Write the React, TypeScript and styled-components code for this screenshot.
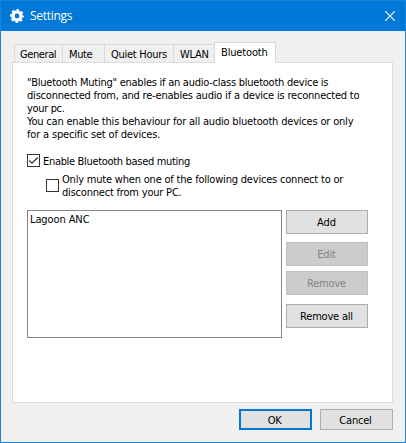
import React from 'react';
import styled, { createGlobalStyle } from 'styled-components';

const Global = createGlobalStyle`
  * { box-sizing: border-box; }
  body { margin: 0; overflow: hidden; }
`;

const Dialog = styled.div`
  width: 406px;
  height: 443px;
  display: flex;
  flex-direction: column;
  border: 1px solid #1883d7;
  background: #f0f0f0;
  color: #000;
  font: 11px/13px 'DejaVu Sans Condensed', 'DejaVu Sans', sans-serif;
  white-space: nowrap;
`;

const TitleBar = styled.header`
  height: 30px;
  flex: none;
  display: flex;
  align-items: center;
  padding: 0 10px 0 9px;
  background: #0078d7;
  color: #fff;
`;

const Title = styled.h1`
  flex: 1;
  margin: 0 0 0 6px;
  font: 400 12px/16px 'Open Sans', 'Noto Sans', sans-serif;
  letter-spacing: -0.3px;
`;

const Text = styled.span<{ $spacing?: number }>`
  display: block;
  letter-spacing: ${({ $spacing = -0.2 }) => $spacing}px;
`;

const Tabs = styled.nav`
  height: 21px;
  margin: 11px 0 -1px 13px;
  flex: none;
  display: flex;
  align-items: flex-end;
`;

const Tab = styled.div<{ $width: number; $active?: boolean; $indent?: number }>`
  width: ${({ $width }) => $width}px;
  height: ${({ $active }) => ($active ? 21 : 18)}px;
  margin-bottom: ${({ $active }) => ($active ? 0 : 1)}px;
  padding: 3px 0 0 ${({ $indent = 6 }) => $indent}px;
  border: 1px solid #d9d9d9;
  border-bottom: 0;
  border-right-width: ${({ $active }) => ($active ? 1 : 0)}px;
  background: ${({ $active }) => ($active ? '#fff' : '#f0f0f0')};
  z-index: ${({ $active }) => ($active ? 1 : 0)};
`;

const Panel = styled.main`
  width: 381px;
  height: 341px;
  margin-left: 11px;
  padding: 13px 0 0 14px;
  border: 1px solid #dcdcdc;
  background: #fff;
`;

const CheckRow = styled.label`
  height: 14px;
  display: flex;
  align-items: flex-start;
  gap: 3px;
  margin-top: 13px;
  > ${Text} { margin-top: 1px; }
`;

const SubCheckRow = styled.label`
  display: flex;
  align-items: flex-start;
  gap: 3px;
  margin: 5px 0 0 19px;
`;

const Box = styled.span<{ $drop?: number }>`
  width: 13px;
  height: 13px;
  flex: none;
  margin-top: ${({ $drop = 0 }) => $drop}px;
  display: grid;
  place-items: center;
  border: 1px solid #333;
`;

const Devices = styled.section`
  display: flex;
  gap: 4px;
  margin-top: 11px;
`;

const List = styled.div`
  width: 255px;
  height: 128px;
  padding: 2px;
  border: 1px solid #828790;
`;

const Actions = styled.div`
  display: flex;
  flex-direction: column;
`;

const Button = styled.button<{ $width?: number; $gap?: number; $primary?: boolean }>`
  width: ${({ $width = 82 }) => $width}px;
  height: ${({ $width }) => ($width ? 21 : 24)}px;
  margin: ${({ $gap = 0 }) => $gap}px 0 0;
  padding: ${({ $width }) => ($width ? '1px 2px 0 0' : '0 1px 0 0')};
  display: flex;
  align-items: center;
  justify-content: center;
  border: ${({ $primary }) => ($primary ? '2px solid #0078d7' : '1px solid #adadad')};
  background: #e1e1e1;
  color: #000;
  font: inherit;
  &:disabled { background: #ccc; border-color: #bfbfbf; color: #838383; }
`;

const Footer = styled.footer`
  display: flex;
  justify-content: flex-end;
  gap: 8px;
  margin: 6px 12px 0 0;
`;

const tabs = [
  { label: 'General', width: 48, spacing: -0.4, indent: 5 },
  { label: 'Mute', width: 42, spacing: -0.4 },
  { label: 'Quiet Hours', width: 69, spacing: -0.28 },
  { label: 'WLAN', width: 41, spacing: -0.3 },
  { label: 'Bluetooth', width: 62, spacing: -0.15, active: true },
];

const intro = [
  { text: '"Bluetooth Muting" enables if an audio-class bluetooth device is', spacing: -0.25 },
  { text: 'disconnected from, and re-enables audio if a device is reconnected to', spacing: -0.2 },
  { text: 'your pc.', spacing: -0.35 },
  { text: 'You can enable this behaviour for all audio bluetooth devices or only', spacing: -0.19 },
  { text: 'for a specific set of devices.', spacing: -0.17 },
];

const GearIcon = () => (
  <svg width="14" height="14" viewBox="0 0 14 14" fill="none" stroke="#fff">
    <circle cx="7" cy="7" r="4.1" strokeWidth="3.4" />
    <circle cx="7" cy="7" r="6.2" strokeWidth="1.6" strokeDasharray="2.6 2.27" strokeDashoffset="1.3" />
  </svg>
);

export default function App() {
  return (
    <Dialog>
      <Global />
      <TitleBar>
        <GearIcon />
        <Title>Settings</Title>
        <svg width="10" height="10" viewBox="0 0 10 10" stroke="#fff" strokeWidth="1.1">
          <path d="M0 0 10 10M10 0 0 10" />
        </svg>
      </TitleBar>
      <Tabs>
        {tabs.map((t) => (
          <Tab key={t.label} $width={t.width} $active={t.active} $indent={t.indent}>
            <Text $spacing={t.spacing}>{t.label}</Text>
          </Tab>
        ))}
      </Tabs>
      <Panel>
        {intro.map((l) => (
          <Text key={l.text} $spacing={l.spacing}>{l.text}</Text>
        ))}
        <CheckRow>
          <Box>
            <svg width="11" height="11" viewBox="0 0 11 11" fill="none" stroke="#333" strokeWidth="1.3">
              <path d="M1.3 5.5 4 8.2 9.7 2.5" />
            </svg>
          </Box>
          <Text $spacing={-0.32}>Enable Bluetooth based muting</Text>
        </CheckRow>
        <SubCheckRow>
          <Box $drop={6} />
          <div>
            <Text>Only mute when one of the following devices connect to or</Text>
            <Text>disconnect from your PC.</Text>
          </div>
        </SubCheckRow>
        <Devices>
          <List><Text $spacing={-0.1}>Lagoon ANC</Text></List>
          <Actions>
            <Button><Text $spacing={0}>Add</Text></Button>
            <Button $gap={8} disabled><Text>Edit</Text></Button>
            <Button $gap={5} disabled><Text>Remove</Text></Button>
            <Button $gap={9}><Text>Remove all</Text></Button>
          </Actions>
        </Devices>
      </Panel>
      <Footer>
        <Button $width={73} $primary><Text $spacing={-0.4}>OK</Text></Button>
        <Button $width={73}><Text>Cancel</Text></Button>
      </Footer>
    </Dialog>
  );
}
